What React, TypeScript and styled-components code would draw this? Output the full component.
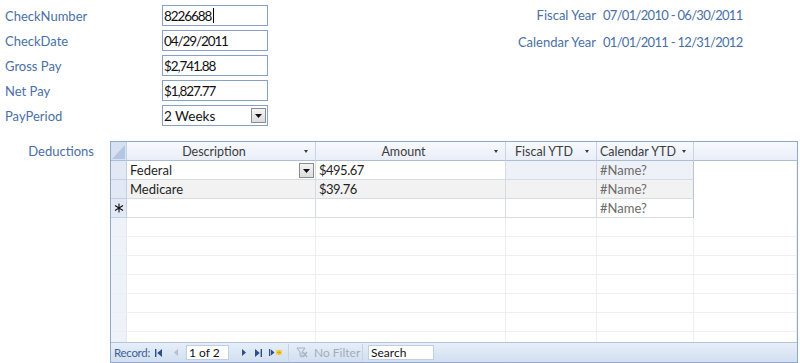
import React from "react";
import styled, { createGlobalStyle } from "styled-components";

const GlobalStyle = createGlobalStyle`
  html, body {
    margin: 0;
    padding: 0;
    background: #ffffff;
  }
  body {
    font-family: Lato, "Open Sans", "Liberation Sans", sans-serif;
    font-size: 13px;
    color: #1f1f1f;
  }
`;

const Page = styled.div`
  width: 800px;
  height: 363px;
  overflow: hidden;
  display: flex;
  flex-direction: column;
`;

const TopSection = styled.div`
  display: flex;
  padding: 5px 0 0 5px;
`;

const FieldGrid = styled.div`
  display: grid;
  grid-template-columns: 157px 106px;
  grid-auto-rows: 21px;
  row-gap: 4px;
`;

const FieldLabel = styled.div`
  color: #4a6fa5;
  font-size: 13px;
  display: flex;
  align-items: center;
`;

const InputBox = styled.div<{ $numeric?: boolean }>`
  box-sizing: border-box;
  border: 1px solid #86a0c6;
  background: #fff;
  display: flex;
  align-items: center;
  padding: 0 1px;
  font-size: 13.5px;
  letter-spacing: ${(p) => (p.$numeric ? "-1.1px" : "0")};
  color: #111;
  position: relative;
`;

const Caret = styled.span`
  display: inline-block;
  width: 1px;
  height: 15px;
  background: #000;
  margin-left: 2px;
`;

const ComboButton = styled.div`
  position: absolute;
  right: 1px;
  top: 2px;
  width: 15px;
  height: 15px;
  box-sizing: border-box;
  border: 1px solid #8b8b8b;
  background: linear-gradient(#f4f4f4, #dcdcdc);
  display: flex;
  align-items: center;
  justify-content: center;
`;

const InfoGrid = styled.div`
  display: grid;
  grid-template-columns: 90px auto;
  column-gap: 7px;
  grid-auto-rows: 20px;
  row-gap: 7px;
  margin-left: 238px;
`;

const InfoLabel = styled.div`
  color: #4a6fa5;
  text-align: right;
  display: flex;
  align-items: center;
  justify-content: flex-end;
  white-space: nowrap;
`;

const InfoValue = styled.div`
  color: #4a6fa5;
  display: flex;
  align-items: center;
  white-space: nowrap;
  letter-spacing: -0.7px;
`;

const DeductionSection = styled.div`
  display: flex;
  margin-top: 15px;
  flex: 1;
  min-height: 0;
`;

const SubLabel = styled.div`
  width: 110px;
  box-sizing: border-box;
  padding-right: 16px;
  text-align: right;
  color: #4a6fa5;
  font-size: 13px;
  line-height: 20px;
`;

const Sheet = styled.div`
  width: 688px;
  box-sizing: border-box;
  border: 1px solid #8fa8cc;
  display: flex;
  flex-direction: column;
  background: #fff;
`;

const SheetBody = styled.div`
  flex: 1;
  min-height: 0;
  overflow: hidden;
`;

const Row = styled.div`
  display: grid;
  grid-template-columns: 16px 189px 190px 91px 97px 1fr;
  height: 19px;
`;

const HeadCell = styled.div<{ $corner?: boolean }>`
  box-sizing: border-box;
  background: ${(p) =>
    p.$corner ? "#d6e1f1" : "linear-gradient(#f7f9fd, #e9eef8)"};
  border-right: 1px solid #c9d3e4;
  border-bottom: 1px solid #aebdd6;
  color: #3c3c3c;
  font-size: 12.5px;
  display: flex;
  align-items: center;
  justify-content: center;
  position: relative;
  white-space: nowrap;
  padding: ${(p) => (p.$corner ? "0" : "0 16px 0 2px")};
  &:last-child {
    border-right: none;
  }
`;

const HeadArrow = styled.span`
  position: absolute;
  right: 7px;
  top: 8px;
  width: 0;
  height: 0;
  border-left: 2.5px solid transparent;
  border-right: 2.5px solid transparent;
  border-top: 3px solid #3c3c3c;
`;

const Selector = styled.div`
  box-sizing: border-box;
  background: #e2e9f5;
  border-right: 1px solid #c3cfe2;
  border-bottom: 1px solid #c3cfe2;
  display: flex;
  align-items: center;
  justify-content: center;
`;

const Cell = styled.div<{ $bg?: string; $edge?: boolean; $muted?: boolean }>`
  box-sizing: border-box;
  background: ${(p) => p.$bg || "#fff"};
  border-right: 1px solid ${(p) => (p.$edge ? "#b7c3d7" : "#d6dce6")};
  border-bottom: 1px solid #d6dce6;
  display: flex;
  align-items: center;
  padding: 0 3px;
  color: ${(p) => (p.$muted ? "#6b6b6b" : "#1f1f1f")};
  position: relative;
  white-space: nowrap;
`;

const Money = styled.span`
  letter-spacing: -0.5px;
`;

const Blank = styled.div`
  background: #fff;
  border-right: 1px solid #f1f1f1;
`;

const FillerRow = styled(Row)`
  border-bottom: 1px solid #efefef;
  box-sizing: border-box;
`;

const FillerSel = styled.div`
  background: #eef2f9;
  border-right: 1px solid #e3e8f1;
`;

const FillerCell = styled.div`
  border-right: 1px solid #eeeeee;
`;

const NavBar = styled.div`
  height: 20px;
  box-sizing: border-box;
  border-top: 1px solid #b3c4dd;
  background: linear-gradient(#e6eef9, #d2dff0);
  display: flex;
  align-items: center;
  padding-left: 3px;
  font-size: 12px;
`;

const NavLabel = styled.span`
  color: #3d5f94;
  font-size: 11.5px;
  letter-spacing: -0.3px;
  flex-shrink: 0;
  white-space: nowrap;
`;

const NavIcon = styled.span<{ $gap: number }>`
  display: inline-flex;
  align-items: center;
  flex-shrink: 0;
  height: 16px;
  margin-left: ${(p) => p.$gap}px;
`;

const NavBox = styled.div<{ $w: number; $gap: number }>`
  width: ${(p) => p.$w}px;
  height: 15px;
  flex-shrink: 0;
  box-sizing: border-box;
  background: #fff;
  border: 1px solid #c1cfe3;
  display: flex;
  align-items: center;
  padding-left: 2px;
  color: #111;
  margin-left: ${(p) => p.$gap}px;
`;

const FilterBlock = styled.div`
  display: flex;
  align-items: center;
  gap: 6px;
  width: 75px;
  flex-shrink: 0;
  box-sizing: border-box;
  height: 17px;
  padding-left: 7px;
  margin-left: 5px;
  border-left: 1px solid #c6d3e6;
  border-right: 1px solid #c6d3e6;
  color: #a5acb8;
  white-space: nowrap;
`;

const Down = () => (
  <svg width="7" height="4" viewBox="0 0 7 4">
    <path d="M0 0 H7 L3.5 4 Z" fill="#111" />
  </svg>
);

const CornerMark = () => (
  <svg width="15" height="18" viewBox="0 0 15 18">
    <path d="M14 3 V17 H1 Z" fill="#b3c6e4" />
  </svg>
);

const NewRowMark = () => (
  <svg width="10" height="10" viewBox="0 0 10 10">
    <path
      d="M5 0.5 V9.5 M1 2.5 L9 7.5 M1 7.5 L9 2.5"
      stroke="#111"
      strokeWidth="1.1"
    />
  </svg>
);

const FirstIcon = () => (
  <svg width="7" height="8" viewBox="0 0 7 8">
    <rect x="0" y="0" width="1.4" height="8" fill="#2d4f86" />
    <path d="M7 0 V8 L2.2 4 Z" fill="#2d4f86" />
  </svg>
);

const PrevIcon = () => (
  <svg width="4" height="7" viewBox="0 0 4 7">
    <path d="M4 0 V7 L0 3.5 Z" fill="#b4bfcf" />
  </svg>
);

const NextIcon = () => (
  <svg width="4" height="7" viewBox="0 0 4 7">
    <path d="M0 0 V7 L4 3.5 Z" fill="#2d4f86" />
  </svg>
);

const LastIcon = () => (
  <svg width="7" height="8" viewBox="0 0 7 8">
    <path d="M0 0 V8 L4.8 4 Z" fill="#2d4f86" />
    <rect x="5.6" y="0" width="1.4" height="8" fill="#2d4f86" />
  </svg>
);

const NewIcon = () => (
  <svg width="14" height="9" viewBox="0 0 14 9">
    <rect x="0" y="1" width="1.3" height="7" fill="#2d4f86" />
    <path d="M2 1.5 V7.5 L5.5 4.5 Z" fill="#2d4f86" />
    <rect x="7" y="2" width="6" height="5" fill="#f3d25a" />
    <path d="M8 4.5 H12 M10 2.5 V6.5" stroke="#e0a516" strokeWidth="1" />
  </svg>
);

const FilterIcon = () => (
  <svg width="12" height="11" viewBox="0 0 12 11">
    <path d="M1 1 H9 L6 5 V10 L4 9 V5 Z" fill="none" stroke="#a7b0c0" strokeWidth="1" />
    <path d="M7 5 L11 10 M11 5 L7 10" stroke="#a7b0c0" strokeWidth="1.3" />
  </svg>
);

const fields = [
  { label: "CheckNumber", value: "8226688", caret: true, numeric: true },
  { label: "CheckDate", value: "04/29/2011", numeric: true },
  { label: "Gross Pay", value: "$2,741.88", numeric: true },
  { label: "Net Pay", value: "$1,827.77", numeric: true },
  { label: "PayPeriod", value: "2 Weeks", combo: true },
];

const deductions = [
  { desc: "Federal", amount: "$495.67", current: true },
  { desc: "Medicare", amount: "$39.76" },
];

const columns = ["Description", "Amount", "Fiscal YTD", "Calendar YTD"];

const App: React.FC = () => {
  return (
    <Page>
      <GlobalStyle />
      <TopSection>
        <FieldGrid>
          {fields.map((f) => (
            <React.Fragment key={f.label}>
              <FieldLabel>{f.label}</FieldLabel>
              <InputBox $numeric={f.numeric}>
                {f.value}
                {f.caret && <Caret />}
                {f.combo && (
                  <ComboButton>
                    <Down />
                  </ComboButton>
                )}
              </InputBox>
            </React.Fragment>
          ))}
        </FieldGrid>
        <InfoGrid>
          <InfoLabel>Fiscal Year</InfoLabel>
          <InfoValue>07/01/2010 - 06/30/2011</InfoValue>
          <InfoLabel>Calendar Year</InfoLabel>
          <InfoValue>01/01/2011 - 12/31/2012</InfoValue>
        </InfoGrid>
      </TopSection>

      <DeductionSection>
        <SubLabel>Deductions</SubLabel>
        <Sheet>
          <Row>
            <HeadCell $corner>
              <CornerMark />
            </HeadCell>
            {columns.map((c) => (
              <HeadCell key={c}>
                {c}
                <HeadArrow />
              </HeadCell>
            ))}
            <HeadCell />
          </Row>

          {deductions.map((d) => {
            const bg = d.current ? "#eef1f7" : "#f2f2f2";
            return (
              <Row key={d.desc}>
                <Selector />
                <Cell $bg={d.current ? "#fff" : bg}>
                  {d.desc}
                  {d.current && (
                    <ComboButton>
                      <Down />
                    </ComboButton>
                  )}
                </Cell>
                <Cell $bg={d.current ? "#fff" : bg}>
                  <Money>{d.amount}</Money>
                </Cell>
                <Cell $bg={bg} />
                <Cell $bg={bg} $muted $edge>
                  #Name?
                </Cell>
                <Blank />
              </Row>
            );
          })}

          <Row>
            <Selector>
              <NewRowMark />
            </Selector>
            <Cell />
            <Cell />
            <Cell />
            <Cell $muted $edge>
              #Name?
            </Cell>
            <Blank />
          </Row>

          <SheetBody>
            {Array.from({ length: 8 }).map((_, i) => (
              <FillerRow key={i}>
                <FillerSel />
                <FillerCell />
                <FillerCell />
                <FillerCell />
                <FillerCell />
                <FillerCell />
              </FillerRow>
            ))}
          </SheetBody>

          <NavBar>
            <NavLabel>Record:</NavLabel>
            <NavIcon $gap={5}>
              <FirstIcon />
            </NavIcon>
            <NavIcon $gap={12}>
              <PrevIcon />
            </NavIcon>
            <NavBox $w={43} $gap={8}>
              1 of 2
            </NavBox>
            <NavIcon $gap={13}>
              <NextIcon />
            </NavIcon>
            <NavIcon $gap={9}>
              <LastIcon />
            </NavIcon>
            <NavIcon $gap={7}>
              <NewIcon />
            </NavIcon>
            <FilterBlock>
              <FilterIcon />
              No Filter
            </FilterBlock>
            <NavBox $w={66} $gap={5}>
              Search
            </NavBox>
          </NavBar>
        </Sheet>
      </DeductionSection>
    </Page>
  );
};

export default App;
